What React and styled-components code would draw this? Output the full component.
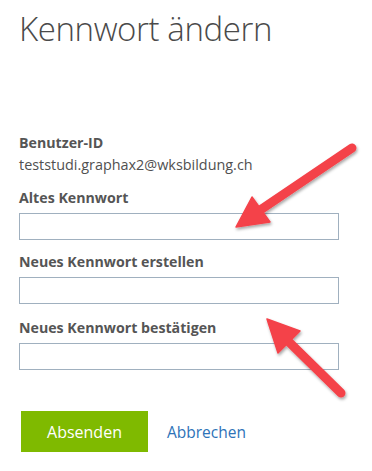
import React from 'react'
import styled, { createGlobalStyle } from 'styled-components'

const GlobalStyle = createGlobalStyle`
    html, body {
        margin: 0;
        padding: 0;
        background: #fff;
    }
    body {
        font-family: "Open Sans", "Liberation Sans", sans-serif;
        color: #505050;
    }
`

const Page = styled.div`
    position: relative;
    width: 372px;
    height: 471px;
    overflow: hidden;
    padding: 9px 0 0 19px;
    box-sizing: border-box;
`

const Title = styled.h1`
    margin: 0;
    font-size: 33px;
    font-weight: 300;
    line-height: 40px;
    color: #4a4a4a;
    letter-spacing: -0.4px;
`

const Form = styled.div`
    margin-top: 85px;
    display: flex;
    flex-direction: column;
`

const Label = styled.div`
    font-size: 14.2px;
    font-weight: 700;
    line-height: 18px;
    color: #555;
    margin-top: ${p => p.$gap || 0}px;
`

const Value = styled.div`
    font-size: 14.4px;
    line-height: 18px;
    margin-top: 4px;
    color: #505050;
`

const Input = styled.input`
    display: block;
    width: 320px;
    height: 27px;
    box-sizing: border-box;
    margin: 6px 0 0;
    border: 1px solid #a0b0bf;
    background: #fff;
    padding: 0 6px;
    outline: none;
`

const Actions = styled.div`
    margin-top: 41px;
    display: flex;
    align-items: center;
    margin-left: 2px;
`

const Submit = styled.button`
    width: 127px;
    height: 41px;
    border: none;
    background: #7fba00;
    color: #fff;
    font-family: inherit;
    font-size: 16px;
    padding: 0;
    cursor: pointer;
`

const CancelLink = styled.a`
    margin-left: 19px;
    font-size: 15.5px;
    color: #2e73b8;
    text-decoration: none;
    cursor: pointer;
`

const Overlay = styled.svg`
    position: absolute;
    left: 0;
    top: 0;
    pointer-events: none;
`

function Arrow({ tail, tip, left, right }) {
    const base = [(left[0] + right[0]) / 2, (left[1] + right[1]) / 2]
    return (
        <g>
            <line
                x1={tail[0]} y1={tail[1]} x2={base[0]} y2={base[1]}
                stroke="#f4424a" strokeWidth="9" strokeLinecap="round"
            />
            <polygon
                points={`${tip[0]},${tip[1]} ${left[0]},${left[1]} ${right[0]},${right[1]}`}
                fill="#f4424a" stroke="#f4424a" strokeWidth="1.5" strokeLinejoin="round"
            />
        </g>
    )
}

export default function App() {
    return (
        <>
            <GlobalStyle />
            <Page>
                <Title>Kennwort ändern</Title>
                <Form>
                    <Label>Benutzer-ID</Label>
                    <Value>teststudi.graphax2@wksbildung.ch</Value>
                    <Label $gap={15}>Altes Kennwort</Label>
                    <Input type="password" />
                    <Label $gap={13}>Neues Kennwort erstellen</Label>
                    <Input type="password" />
                    <Label $gap={15}>Neues Kennwort bestätigen</Label>
                    <Input type="password" />
                    <Actions>
                        <Submit>Absenden</Submit>
                        <CancelLink>Abbrechen</CancelLink>
                    </Actions>
                </Form>
                <Overlay width="372" height="471" viewBox="0 0 372 471">
                    <defs>
                        <filter id="shadow" x="-20%" y="-20%" width="140%" height="140%">
                            <feDropShadow dx="1" dy="2" stdDeviation="1.5" floodColor="#000" floodOpacity="0.35" />
                        </filter>
                    </defs>
                    <g filter="url(#shadow)">
                        <Arrow tail={[352, 148]} tip={[236, 227]} left={[252, 197]} right={[270, 222]} />
                        <Arrow tail={[341, 393]} tip={[267, 319]} left={[300, 331]} right={[278, 353]} />
                    </g>
                </Overlay>
            </Page>
        </>
    )
}
